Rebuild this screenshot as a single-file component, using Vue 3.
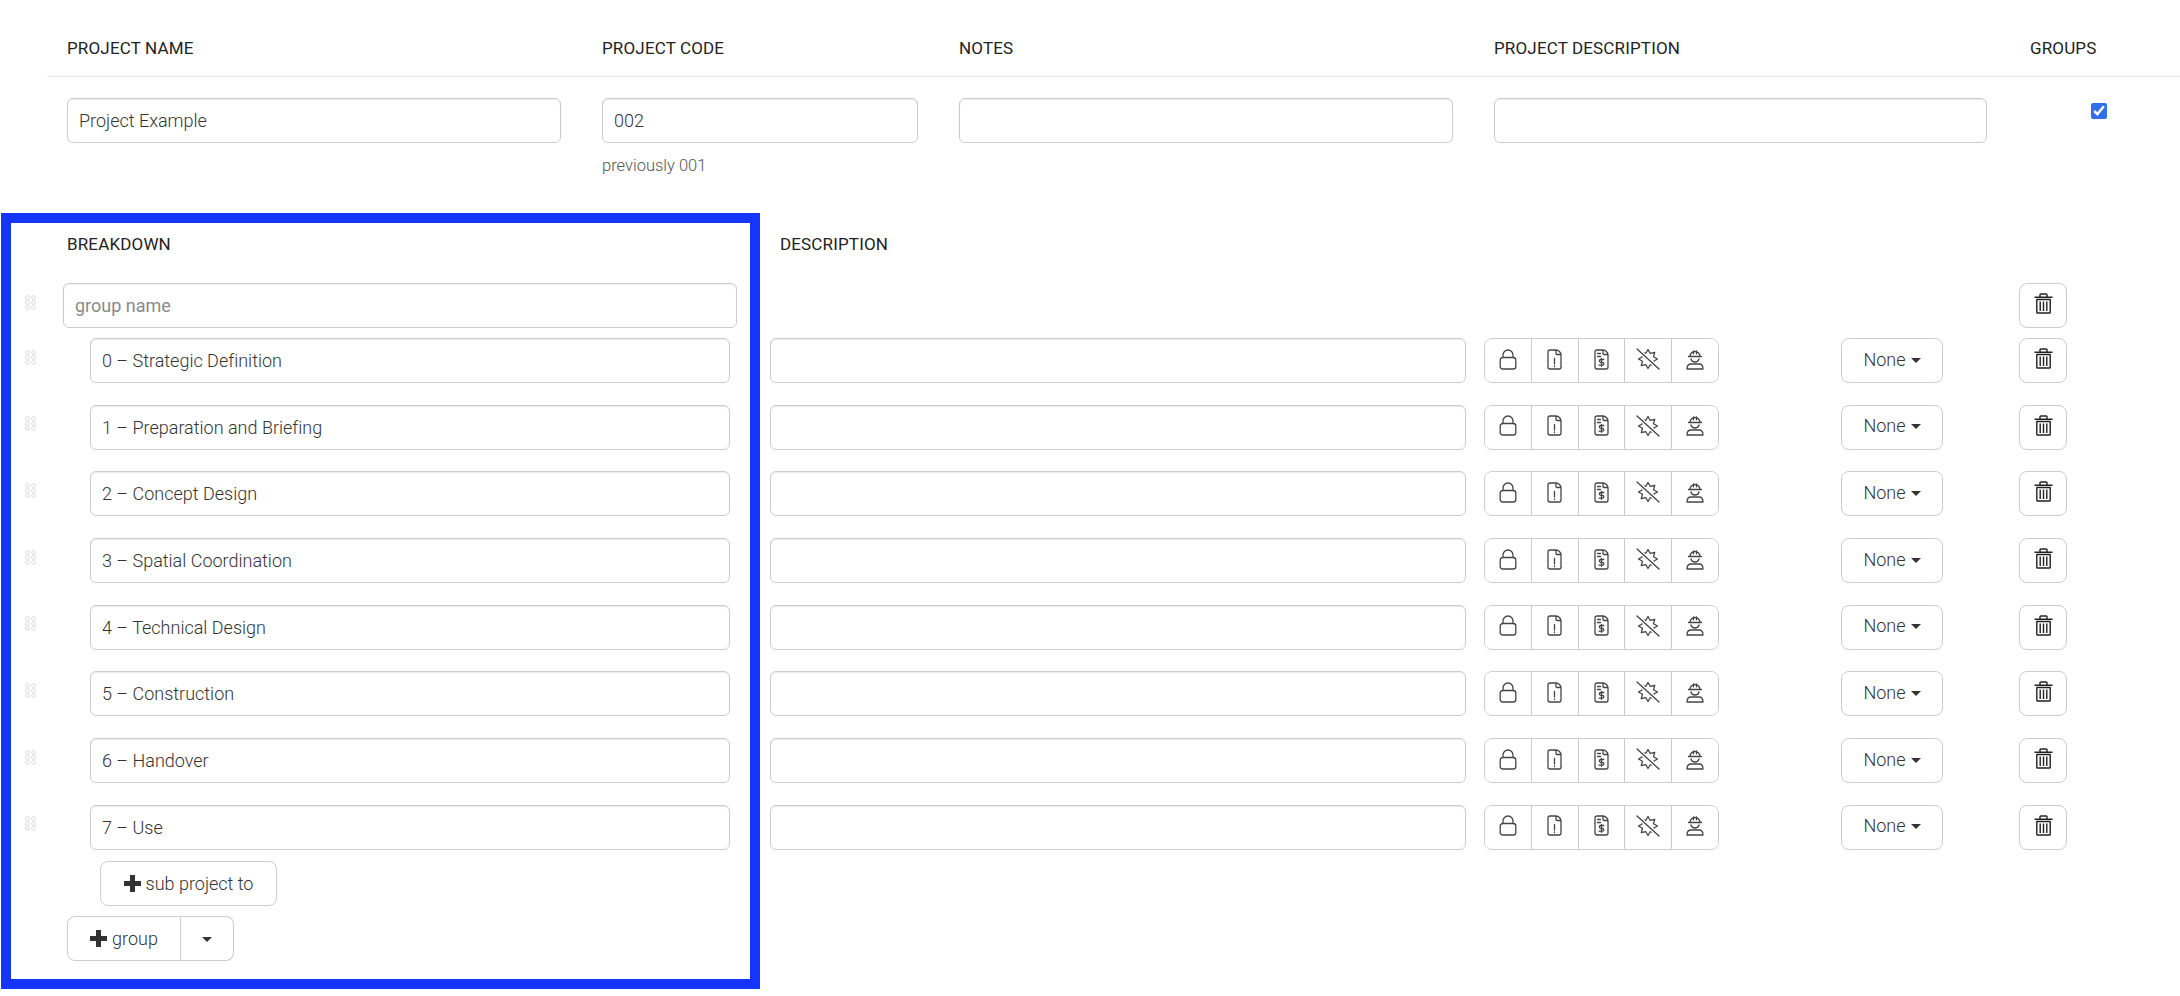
<script setup>
const rows = [
  '0 – Strategic Definition',
  '1 – Preparation and Briefing',
  '2 – Concept Design',
  '3 – Spatial Coordination',
  '4 – Technical Design',
  '5 – Construction',
  '6 – Handover',
  '7 – Use',
]
const dots = [[2.5,2.5],[8.5,2.5],[2.5,7.5],[8.5,7.5],[2.5,12.5],[8.5,12.5]]
const star = Array.from({ length: 16 }, (_, i) => {
  const a = (i * Math.PI) / 8 - Math.PI / 2
  const r = i % 2 ? 6 : 9.5
  return `${(12 + r * Math.cos(a)).toFixed(2)},${(11 + r * Math.sin(a)).toFixed(2)}`
}).join(' ')
</script>

<template>
  <div class="page">
    <div class="head-row">
      <div class="col-name">PROJECT NAME</div>
      <div class="col-code">PROJECT CODE</div>
      <div class="col-notes">NOTES</div>
      <div class="col-desc">PROJECT DESCRIPTION</div>
      <div class="col-groups">GROUPS</div>
    </div>
    <div class="value-row">
      <div class="col-name"><input class="field" value="Project Example" /></div>
      <div class="col-code">
        <input class="field" value="002" />
        <div class="hint">previously 001</div>
      </div>
      <div class="col-notes"><input class="field" /></div>
      <div class="col-desc"><input class="field" /></div>
      <div class="col-groups check-cell"><input class="check" type="checkbox" checked /></div>
    </div>

    <div class="breakdown">
      <div class="section-head">
        <div class="sh-a">BREAKDOWN</div>
        <div class="sh-b">DESCRIPTION</div>
      </div>

      <div class="row group-row">
        <svg class="handle" width="11" height="15" viewBox="0 0 11 15">
          <circle v-for="(d, i) in dots" :key="i" :cx="d[0]" :cy="d[1]" r="1.9" />
        </svg>
        <input class="field group-name" placeholder="group name" />
        <button class="btn trash" aria-label="delete">
          <svg width="19" height="21" viewBox="0 0 19 21"><path d="M0.500 4.200h18M6 4.200V1.800c0-.5.300-.8.800-.8h5.400c.5 0 .8.300.8.800v2.400M2.800 6.500h13.400v12.700c0 .5-.3.800-.8.800H3.600c-.5 0-.8-.3-.8-.8ZM6.200 8.500v9.500M9.500 8.500v9.500M12.800 8.500v9.500" /></svg>
        </button>
      </div>

      <div v-for="r in rows" :key="r" class="row sub-row">
        <svg class="handle" width="11" height="15" viewBox="0 0 11 15">
          <circle v-for="(d, i) in dots" :key="i" :cx="d[0]" :cy="d[1]" r="1.9" />
        </svg>
        <input class="field sub-name" :value="r" />
        <input class="field sub-desc" />
        <div class="icons">
          <button class="cell" aria-label="lock">
            <svg width="18" height="21" viewBox="0 0 18 21"><path d="M4 8.500V6a5 5 0 0 1 10 0v2.500M3.800 8.500h10.400c1.500 0 2.600 1.100 2.600 2.600v6.300c0 1.500-1.100 2.600-2.600 2.600H3.800c-1.500 0-2.600-1.100-2.600-2.600v-6.300c0-1.500 1.100-2.600 2.600-2.600Z" /></svg>
          </button>
          <button class="cell" aria-label="alert">
            <svg width="15" height="21" viewBox="0 0 15 21"><path d="M9 1H3C1.800 1 1 1.800 1 3v15c0 1.200.8 2 2 2h9c1.200 0 2-.8 2-2V6C14 3.500 11.500 1 9 1ZM9 1v3.500c0 .6.400 1 1 1h4M7.500 9.500v5.500M7.500 17v.6" /></svg>
          </button>
          <button class="cell" aria-label="invoice">
            <svg width="15" height="21" viewBox="0 0 15 21"><path d="M9 1H3C1.800 1 1 1.800 1 3v15c0 1.200.8 2 2 2h9c1.200 0 2-.8 2-2V6C14 3.500 11.500 1 9 1ZM9 1v3.500c0 .6.400 1 1 1h4M3.500 4.500h3M3.500 7.500h3M9.800 10.500H6.800a1.300 1.300 0 0 0 0 2.800h1.600a1.300 1.300 0 0 1 0 2.800H5M7.500 9.300v8" /></svg>
          </button>
          <button class="cell" aria-label="no bugs">
            <svg width="24" height="22" viewBox="0 0 24 22">
              <polygon :points="star" />
              <path class="slash-gap" d="M1 1l22 20" />
              <path d="M1 1l22 20" />
            </svg>
          </button>
          <button class="cell" aria-label="contractor">
            <svg width="18" height="21" viewBox="0 0 18 21"><path d="M4 7.500a5 5 0 0 1 10 0M2.500 7.500h13M5 10c.5 2 2 3 4 3s3.500-1 4-3M7.500 1.800v3M10.500 1.800v3M5 15h8c2.500 0 4 1.500 4 5H1c0-3.500 1.500-5 4-5Z" /></svg>
          </button>
        </div>
        <button class="btn none">None<span class="caret"></span></button>
        <button class="btn trash" aria-label="delete">
          <svg width="19" height="21" viewBox="0 0 19 21"><path d="M0.500 4.200h18M6 4.200V1.800c0-.5.300-.8.800-.8h5.400c.5 0 .8.300.8.800v2.400M2.800 6.500h13.400v12.700c0 .5-.3.800-.8.800H3.600c-.5 0-.8-.3-.8-.8ZM6.200 8.500v9.500M9.500 8.500v9.500M12.800 8.500v9.500" /></svg>
        </button>
      </div>

      <button class="btn sub-add"><span class="plus"></span>sub project to</button>
      <div class="split">
        <button class="btn split-main"><span class="plus"></span>group</button>
        <button class="btn split-caret" aria-label="more"><span class="caret"></span></button>
      </div>
    </div>

    <div class="highlight"></div>
  </div>
</template>

<style>
html, body { margin: 0; background: #fff; }
</style>

<style scoped>
.page {
  position: relative;
  width: 2180px;
  height: 996px;
  overflow: hidden;
  font-family: "Roboto", "Liberation Sans", sans-serif;
  color: #212529;
  font-size: 18px;
  font-weight: 300;
  font-variant-ligatures: none;
}
.head-row, .value-row {
  display: grid;
  grid-template-columns: 494px 316px 494px 493px 1fr;
  column-gap: 41px;
}
.head-row {
  margin-left: 47px;
  padding: 35px 0 15px 20px;
  height: 77px;
  box-sizing: border-box;
  border-bottom: 1px solid #e6e6e6;
  font-size: 17px;
  font-weight: 400;
  letter-spacing: .15px;
  line-height: 26px;
  color: #222;
}
.col-groups { margin-left: 2px; }
.value-row {
  padding-left: 67px;
  margin-top: 21px;
  height: 115px;
  align-items: start;
}
.field {
  display: block;
  width: 100%;
  height: 45px;
  box-sizing: border-box;
  border: 1px solid #ccc;
  border-radius: 6px;
  background: #fff;
  padding: 0 11px;
  font: inherit;
  color: #333;
  outline: none;
  box-shadow: inset 0 1px 1px rgba(0,0,0,.075);
}
.field::placeholder { color: #8a8a8a; font-weight: 400; }
.hint {
  margin-top: 13px;
  font-size: 16.500px;
  color: #555;
  line-height: 20px;
}
.check-cell { padding-left: 61px; }
.check {
  display: block;
  width: 16px;
  height: 16px;
  margin: 5px 0 0;
  accent-color: #2f6fed;
}
.section-head {
  display: flex;
  height: 70px;
  padding-top: 18px;
  box-sizing: border-box;
  padding-left: 67px;
  font-size: 17px;
  font-weight: 400;
  letter-spacing: .15px;
  color: #222;
  line-height: 26px;
}
.sh-a { width: 713px; }
.row {
  display: flex;
  align-items: flex-start;
  padding: 0 113px 0 25px;
}
.group-row { height: 55px; }
.sub-row { height: 66.7px; }
.handle {
  flex: none;
  margin-top: 11.500px;
  fill: none;
  stroke: #d6d6d6;
  stroke-width: 0.9;
}
.group-name { width: 674px; margin-left: 27px; }
.sub-name { width: 640px; margin-left: 54px; }
.sub-desc { width: 696px; margin-left: 40px; }
.icons {
  display: flex;
  flex: none;
  width: 235px;
  height: 45px;
  margin-left: 18px;
  box-sizing: border-box;
  border: 1px solid #ccc;
  border-radius: 8px;
  overflow: hidden;
}
.cell {
  flex: 1;
  padding: 0 0 3px;
  border: 0;
  border-left: 1px solid #ccc;
  background: #fff;
  display: flex;
  align-items: center;
  justify-content: center;
}
.cell:first-child { border-left: 0; }
.cell svg {
  fill: none;
  stroke: #444;
  stroke-width: 1.3;
  stroke-linecap: round;
  stroke-linejoin: round;
}
.cell .slash-gap { stroke: #fff; stroke-width: 4; }
.trash svg {
  fill: none;
  stroke: #222;
  stroke-width: 1.4;
  stroke-linejoin: round;
}
.btn {
  display: inline-flex;
  align-items: center;
  justify-content: center;
  flex: none;
  box-sizing: border-box;
  height: 45px;
  border: 1px solid #ccc;
  border-radius: 8px;
  background: #fff;
  font: inherit;
  color: #333;
  padding: 0;
}
.none { width: 102px; margin-left: 122px; gap: 5px; padding-bottom: 3px; }
.trash { width: 48px; margin-left: auto; padding-bottom: 4px; }
.caret {
  display: inline-block;
  width: 0;
  height: 0;
  margin-top: 2px;
  border-top: 5px solid #333;
  border-left: 5px solid transparent;
  border-right: 5px solid transparent;
}
.plus {
  display: inline-block;
  width: 17px;
  height: 17px;
  margin-right: 5px;
  background:
    linear-gradient(#333, #333) center / 17px 5px no-repeat,
    linear-gradient(#333, #333) center / 5px 17px no-repeat;
}
.sub-add { width: 177px; margin: -11px 0 0 100px; display: flex; }
.split { display: flex; margin: 10px 0 0 67px; }
.split-main { width: 114px; border-radius: 8px 0 0 8px; }
.split-caret { width: 53px; border-left: 0; border-radius: 0 8px 8px 0; }
.highlight {
  position: absolute;
  left: 1px;
  top: 213px;
  width: 759px;
  height: 776px;
  box-sizing: border-box;
  border: 10px solid #1535fb;
  pointer-events: none;
}
</style>
